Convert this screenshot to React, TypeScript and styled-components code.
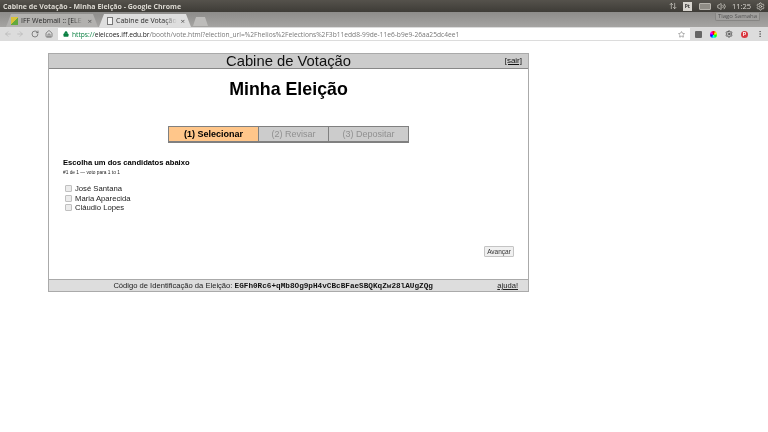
import React from "react";
import styled, {createGlobalStyle} from "styled-components";
import {ArrowLeft, ArrowRight, RotateCw, Home, Lock, Star, ArrowUpDown, Volume2, Settings, MoreVertical} from "lucide-react";

const Global = createGlobalStyle`
  html, body {
    margin: 0;
    padding: 0;
    width: 768px;
    height: 432px;
    overflow: hidden;
    background: #fff;
    font-family: "Liberation Sans", Arial, sans-serif;
  }
`

// the reference is a scaled down capture, everything in it is a little soft
const Screen = styled.div`
  width: 768px;
  height: 432px;
  background: #fff;
  filter: blur(0.25px);
`

const TitleBar = styled.div`
  height: 12px;
  background: linear-gradient(#55524c, #3e3c37);
  display: flex;
  align-items: center;
  justify-content: space-between;
  padding: 0 3px;
  color: #dcd9d2;
  font-size: 7px;
  font-weight: 700;
  font-family: "Open Sans", sans-serif;
`

const Tray = styled.div`
  display: flex;
  align-items: center;
  color: #d8d5cf;
  font-weight: 400;
  font-size: 7.5px;
`

const TrayBadge = styled.span`
  width: 9px;
  height: 9px;
  margin-left: 6px;
  background: #d8d5cf;
  color: #333;
  font-size: 5px;
  font-weight: 700;
  display: flex;
  align-items: center;
  justify-content: center;
`

const Battery = styled.span`
  width: 10px;
  height: 5px;
  margin-left: 7px;
  background: #8f8c85;
  border: 1px solid #b5b2ab;
  border-radius: 1px;
`

const Clock = styled.span`
  margin: 0 5px 0 6px;
`

const TabBar = styled.div`
  height: 15px;
  background: linear-gradient(#8d8c8a, #a5a4a2);
  display: flex;
  align-items: flex-end;
  padding-left: 6px;
  gap: 1px;
  position: relative;
`

const Tab = styled.div<{$active?: boolean}>`
  width: 92px;
  height: 13px;
  background: ${p => p.$active ? "#dedede" : "#b2b1af"};
  clip-path: polygon(0 100%, 5px 0, calc(100% - 5px) 0, 100% 100%);
  display: flex;
  align-items: center;
  gap: 3px;
  padding: 0 6px 0 ${p => p.$active ? 8 : 5}px;
  box-sizing: border-box;
  font-size: 7px;
  font-family: "Open Sans", sans-serif;
  color: #2b2b2b;
  white-space: nowrap;
`

const TabLabel = styled.span`
  flex: 1;
  -webkit-mask-image: linear-gradient(90deg, #000 80%, transparent);
  mask-image: linear-gradient(90deg, #000 80%, transparent);
`

const TabClose = styled.span`
  font-size: 8px;
  line-height: 8px;
  color: #555;
`

const Favicon = styled.span`
  width: 7px;
  height: 8px;
  flex: none;
  background: linear-gradient(135deg, #d8c23a 50%, #63a83d 50%);
`

const PageIcon = styled.span`
  width: 4px;
  height: 6px;
  flex: none;
  border: 1px solid #777;
  background: #f4f4f4;
`

const NewTab = styled.div`
  width: 15px;
  height: 9px;
  margin-left: 1px;
  margin-bottom: 1px;
  background: #bdbcba;
  clip-path: polygon(0 100%, 3px 0, calc(100% - 3px) 0, 100% 100%);
`

const ProfileTag = styled.div`
  position: absolute;
  right: 8px;
  top: 1px;
  width: 43px;
  height: 7px;
  font-size: 6px;
  line-height: 7px;
  text-align: center;
  color: #555;
  background: #a09f9d;
  border: 1px solid #868583;
  border-top: none;
  border-radius: 0 0 2px 2px;
  font-family: "Open Sans", sans-serif;
  white-space: nowrap;
`

const Toolbar = styled.div`
  height: 14px;
  background: #dcdcdc;
  display: flex;
  align-items: center;
  padding-left: 4px;
  color: #555;
`

const NavIcons = styled.div`
  display: flex;
  align-items: center;
  gap: 4px;
  width: 54px;
  flex: none;
`

const Omnibox = styled.div`
  width: 632px;
  height: 12px;
  flex: none;
  background: #fff;
  display: flex;
  align-items: center;
  padding: 0 5px;
  box-sizing: border-box;
  font-size: 6.65px;
  font-family: "Open Sans", sans-serif;
  color: #777;
  white-space: nowrap;
`

const Secure = styled.span`
  color: #0b8043;
`

const Host = styled.span`
  color: #222;
`

const Spacer = styled.span`
  flex: 1;
`

const Extensions = styled.div`
  display: flex;
  align-items: center;
  gap: 8px;
  margin-left: 5px;
`

const Ext = styled.span<{$bg: string; $square?: boolean}>`
  width: 7px;
  height: 7px;
  border-radius: ${p => p.$square ? "1px" : "50%"};
  background: ${p => p.$bg};
  flex: none;
  display: flex;
  align-items: center;
  justify-content: center;
  color: #fff;
  font-size: 5px;
  font-weight: 700;
`

const Page = styled.div`
  padding-top: 12px;
  padding-left: 48px;
`

const Booth = styled.div`
  width: 479px;
  height: 237px;
  border: 1px solid #aaa;
  display: flex;
  flex-direction: column;
  background: #fff;
`

const Header = styled.div`
  height: 14px;
  background: #cccccc;
  border-bottom: 1px solid #888;
  display: flex;
  align-items: center;
  position: relative;
  justify-content: center;
  font-size: 14.8px;
  color: #111;
`

const Exit = styled.a`
  position: absolute;
  right: 6px;
  top: 1px;
  font-size: 8px;
  line-height: 11px;
  color: #111;
  text-decoration: underline;
`

const Main = styled.div`
  flex: 1;
  display: flex;
  flex-direction: column;
  padding: 9px 14px 0;
`

const Election = styled.h1`
  margin: 0;
  text-align: center;
  font-size: 17.8px;
  line-height: 22px;
  font-weight: 700;
  color: #000;
`

const Steps = styled.div`
  display: flex;
  align-self: center;
  margin-top: 26px;
  border: 1px solid #808080;
  border-bottom-width: 2px;
`

const Step = styled.div<{$active?: boolean; $width: number}>`
  width: ${p => p.$width}px;
  height: 14px;
  box-sizing: border-box;
  background: ${p => p.$active ? "#ffc68a" : "#cccccc"};
  color: ${p => p.$active ? "#000" : "#909090"};
  font-size: 9px;
  font-weight: ${p => p.$active ? 700 : 400};
  display: flex;
  align-items: center;
  justify-content: center;
  border-left: 1px solid #808080;
  &:first-child { border-left: none; }
`

const Question = styled.div`
  margin-top: 15px;
  font-size: 7.6px;
  line-height: 10px;
  font-weight: 700;
  color: #000;
`

const Hint = styled.div`
  margin-top: 1px;
  font-size: 4.8px;
  line-height: 7px;
  color: #222;
`

const Options = styled.div`
  margin-top: 7.5px;
  display: flex;
  flex-direction: column;
`

const Option = styled.label`
  height: 9.7px;
  display: flex;
  align-items: center;
  gap: 3px;
  padding-left: 2px;
  font-size: 7.7px;
  color: #222;
`

const Check = styled.input`
  appearance: none;
  box-sizing: border-box;
  width: 7px;
  height: 7px;
  margin: 0;
  background: #ececec;
  border: 1px solid #c0c0c0;
  border-radius: 1px;
`

const Actions = styled.div`
  display: flex;
  justify-content: flex-end;
  margin-top: 33.5px;
`

const NextButton = styled.button`
  width: 30px;
  height: 11px;
  padding: 0;
  font-size: 6.5px;
  font-family: "Liberation Sans", Arial, sans-serif;
  color: #333;
  background: #f0f0f0;
  border: 1px solid #c4c4c4;
  border-radius: 1px;
`

const Footer = styled.div`
  height: 11px;
  background: #dddddd;
  border-top: 1px solid #aaa;
  display: flex;
  align-items: center;
  font-size: 7.6px;
  color: #222;
  white-space: pre;
`

const FooterCode = styled.div`
  flex: 1;
  text-align: center;
`

const Hash = styled.code`
  font-family: "Liberation Mono", monospace;
  font-size: 7.7px;
  font-weight: 700;
  color: #111;
`

const Help = styled.a`
  margin-right: 10px;
  font-size: 7.6px;
  color: #222;
  text-decoration: underline;
`

const candidates = ["José Santana", "Maria Aparecida", "Cláudio Lopes"]

function App() {
  return (
    <Screen>
      <Global />
      <TitleBar>
        <span>Cabine de Votação - Minha Eleição - Google Chrome</span>
        <Tray>
          <ArrowUpDown size={8} />
          <TrayBadge>Pt</TrayBadge>
          <Battery />
          <Volume2 size={9} style={{marginLeft: 6}} />
          <Clock>11:25</Clock>
          <Settings size={9} />
        </Tray>
      </TitleBar>
      <TabBar>
        <Tab>
          <Favicon />
          <TabLabel>IFF Webmail :: [ELE</TabLabel>
          <TabClose>×</TabClose>
        </Tab>
        <Tab $active>
          <PageIcon />
          <TabLabel>Cabine de Votação</TabLabel>
          <TabClose>×</TabClose>
        </Tab>
        <NewTab />
        <ProfileTag>Tiago Samaha</ProfileTag>
      </TabBar>
      <Toolbar>
        <NavIcons>
          <ArrowLeft size={8} color="#b4b4b4" />
          <ArrowRight size={8} color="#b4b4b4" />
          <RotateCw size={8} style={{marginLeft: 3}} />
          <Home size={8} style={{marginLeft: 2}} />
        </NavIcons>
        <Omnibox>
          <Lock size={6} color="#0b8043" fill="#0b8043" style={{marginRight: 3}} />
          <Secure>https://</Secure>
          <Host>eleicoes.iff.edu.br</Host>
          /booth/vote.html?election_url=%2Fhelios%2Felections%2F3b11edd8-99de-11e6-b9e9-26aa25dc4ee1
          <Spacer />
          <Star size={7} />
        </Omnibox>
        <Extensions>
          <Ext $square $bg="#666" />
          <Ext $bg="conic-gradient(red, yellow, lime, cyan, blue, magenta, red)" />
          <Settings size={8} color="#222" />
          <Ext $bg="#d9363e">P</Ext>
          <MoreVertical size={8} />
        </Extensions>
      </Toolbar>
      <Page>
        <Booth>
          <Header>
            Cabine de Votação
            <Exit>[sair]</Exit>
          </Header>
          <Main>
            <Election>Minha Eleição</Election>
            <Steps>
              <Step $active $width={89}>(1) Selecionar</Step>
              <Step $width={70}>(2) Revisar</Step>
              <Step $width={80}>(3) Depositar</Step>
            </Steps>
            <Question>Escolha um dos candidatos abaixo</Question>
            <Hint>#1 de 1 — voto para 1 to 1</Hint>
            <Options>
              {candidates.map(name => (
                <Option key={name}>
                  <Check type="checkbox" />
                  {name}
                </Option>
              ))}
            </Options>
            <Actions>
              <NextButton>Avançar</NextButton>
            </Actions>
          </Main>
          <Footer>
            <FooterCode>Código de Identificação da Eleição: <Hash>EGFh0Rc6+qMb8Og9pH4vCBcBFaeSBQKqZw28lAUgZQg</Hash></FooterCode>
            <Help>ajuda!</Help>
          </Footer>
        </Booth>
      </Page>
    </Screen>
  );
}

export default App;
